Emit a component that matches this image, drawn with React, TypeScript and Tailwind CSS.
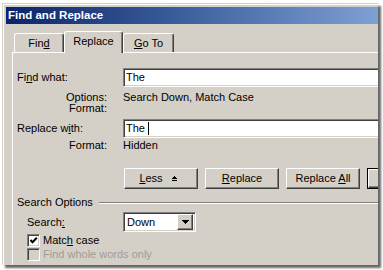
import React from "react";

const raised =
  "border border-t-white border-l-white border-r-[#404040] border-b-[#404040] shadow-[inset_-1px_-1px_0_#808080]";
const sunken =
  "border border-t-[#808080] border-l-[#808080] border-r-white border-b-white shadow-[inset_1px_1px_0_#404040,inset_-1px_-1px_0_#d4d0c8]";

function Tab({ w, h, selected, children }: { w: string; h: string; selected?: boolean; children: React.ReactNode }) {
  return (
    <div
      className={`${w} ${h} ${selected ? "" : "mb-[1px]"} flex items-center justify-center bg-[#d4d0c8] border-t border-l border-r border-t-white border-l-white border-r-[#404040] rounded-t-[3px] shadow-[inset_-1px_0_0_#808080]`}
    >
      {children}
    </div>
  );
}

function Button({ w, children, extra }: { w: string; children: React.ReactNode; extra?: string }) {
  return (
    <div className={`${w} h-[21px] shrink-0 flex items-center justify-center bg-[#d4d0c8] ${raised} ${extra ?? ""}`}>
      {children}
    </div>
  );
}

export default function App() {
  return (
    <div className="w-[383px] h-[270px] bg-white overflow-hidden pt-[3px] pl-[2px] font-['Liberation_Sans',Arial,sans-serif] text-[11px] text-black">
      <div className="w-[376px] h-[262px] bg-[#d4d0c8] pt-[4px] pl-[4px] overflow-hidden shadow-[inset_1px_1px_0_#d4d0c8,inset_2px_2px_0_#ffffff,3px_3px_2px_rgba(0,0,0,0.6)] flex flex-col">
        {/* Title bar */}
        <div className="h-[17px] shrink-0 flex items-center pl-[2px] bg-[linear-gradient(90deg,#0a246a_0%,#3a5c9a_45%,#7fa0d4_100%)]">
          <span className="text-white font-bold text-[11.5px] leading-none">Find and Replace</span>
        </div>

        {/* Tabs */}
        <div className="flex items-end ml-[6px] mt-[7px] h-[22px] relative z-10 -mb-[1px]">
          <div className="ml-[2px]">
            <Tab w="w-[50px]" h="h-[19px]">
              <span>
                Fin<span className="underline">d</span>
              </span>
            </Tab>
          </div>
          <Tab w="w-[59px]" h="h-[22px]" selected>
            <span className="-mt-[2px]">Replace</span>
          </Tab>
          <Tab w="w-[51px]" h="h-[19px]">
            <span>
              <span className="underline">G</span>o To
            </span>
          </Tab>
        </div>

        {/* Panel */}
        <div className="ml-[6px] flex-1 border-t border-l border-white pl-[4px] flex flex-col">
          {/* Find what */}
          <div className="mt-[15px] flex items-center h-[19px]">
            <div className="w-[106px] shrink-0">
              Fi<span className="underline">n</span>d what:
            </div>
            <div className={`w-[300px] h-[19px] shrink-0 bg-white ${sunken} flex items-center pl-[2px]`}>The</div>
          </div>
          <div className="mt-[5px] flex leading-[11px]">
            <div className="w-[106px] shrink-0 text-right pr-[16px]">Options:</div>
            <div>Search Down, Match Case</div>
          </div>
          <div className="flex leading-[11px]">
            <div className="w-[106px] shrink-0 text-right pr-[16px]">Format:</div>
            <div></div>
          </div>
          {/* Replace with */}
          <div className="mt-[5px] flex items-center h-[19px]">
            <div className="w-[106px] shrink-0">
              Replace w<span className="underline">i</span>th:
            </div>
            <div className={`w-[300px] h-[19px] shrink-0 bg-white ${sunken} flex items-center pl-[2px]`}>
              <span className="whitespace-pre">The </span>
              <span className="w-px h-[13px] bg-black" />
            </div>
          </div>
          <div className="mt-[2px] flex leading-[11px]">
            <div className="w-[106px] shrink-0 text-right pr-[16px]">Format:</div>
            <div>Hidden</div>
          </div>

          {/* Buttons */}
          <div className="mt-[17px] ml-[107px] flex gap-[7px]">
            <Button w="w-[74px]" extra="pr-[6px]">
              <span>
                <span className="underline">L</span>ess
              </span>
              <svg width="5" height="5" viewBox="0 0 5 5" className="ml-[9px]" shapeRendering="crispEdges">
                <path d="M2 0h1v1h1v1h1v1H0V2h1V1h1z" fill="black" />
                <rect x="0" y="4" width="5" height="1" fill="black" />
              </svg>
            </Button>
            <Button w="w-[74px]">
              <span>
                <span className="underline">R</span>eplace
              </span>
            </Button>
            <Button w="w-[74px]">
              <span>
                Replace <span className="underline">A</span>ll
              </span>
            </Button>
            <div className="w-[74px] h-[21px] shrink-0 border border-black">
              <div className={`w-full h-full bg-[#d4d0c8] ${raised}`} />
            </div>
          </div>

          {/* Search Options separator */}
          <div className="mt-[8px] flex items-center leading-[11px]">
            <span>Search Options</span>
            <div className="flex-1 ml-[6px] border-t border-b border-t-[#808080] border-b-white" />
          </div>

          {/* Search */}
          <div className="mt-[4px] pl-[10px] flex items-center h-[20px]">
            <div className="w-[96px] shrink-0">
              Search<span className="underline">:</span>
            </div>
            <div className={`w-[73px] h-[20px] shrink-0 bg-white ${sunken} flex items-center p-[2px]`}>
              <span className="flex-1 pl-[1px]">Down</span>
              <div className={`w-[16px] h-[16px] bg-[#d4d0c8] ${raised} flex items-center justify-center`}>
                <svg width="7" height="4" viewBox="0 0 7 4" shapeRendering="crispEdges">
                  <path d="M0 0h7v1H6v1H5v1H4v1H3V3H2V2H1V1H0z" fill="black" />
                </svg>
              </div>
            </div>
          </div>

          {/* Match case */}
          <div className="mt-[2px] pl-[10px] flex items-center h-[13px]">
            <div className={`w-[13px] h-[13px] bg-white ${sunken} flex items-center justify-center`}>
              <svg width="9" height="9" viewBox="0 0 9 9">
                <path d="M1.5 4 L3.5 6.2 L7.8 1.8" stroke="black" strokeWidth="2" fill="none" />
              </svg>
            </div>
            <span className="ml-[3px]">
              Matc<span className="underline">h</span> case
            </span>
          </div>

          {/* Find whole words only */}
          <div className="mt-[1px] pl-[10px] flex items-center h-[13px]">
            <div className={`w-[13px] h-[13px] bg-[#d4d0c8] ${sunken}`} />
            <span className="ml-[3px] text-[#a09c94]">Find whole words only</span>
          </div>
        </div>
      </div>
    </div>
  );
}
